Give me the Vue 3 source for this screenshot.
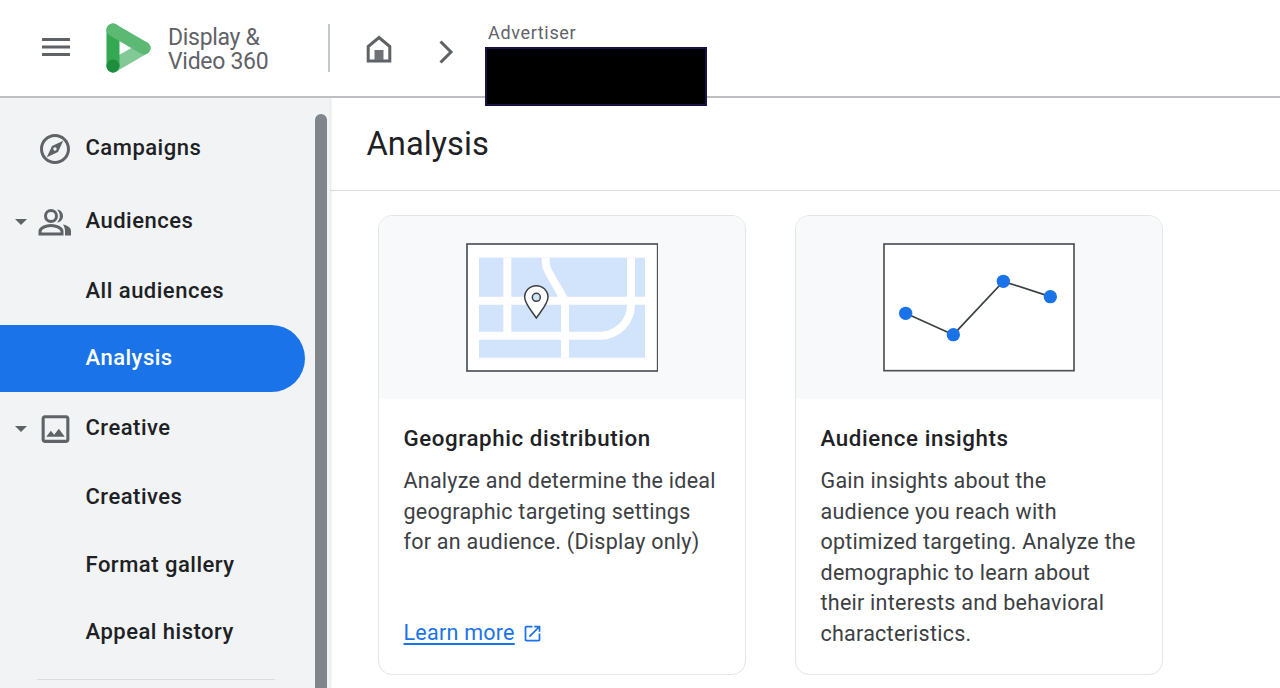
<script setup>
const navItems = [
  { label: "Campaigns", icon: "explore", space: 0 },
  { label: "Audiences", icon: "people", caret: true, space: 6 },
  { label: "All audiences", space: 3 },
  { label: "Analysis", active: true, space: 0 },
  { label: "Creative", icon: "image", caret: true, space: 3 },
  { label: "Creatives", space: 2 },
  { label: "Format gallery", space: 1 },
  { label: "Appeal history", space: 0 },
];

const insights = [
  "Gain insights about the",
  "audience you reach with",
  "optimized targeting. Analyze the",
  "demographic to learn about",
  "their interests and behavioral",
  "characteristics.",
];

const geoLines = [
  "Analyze and determine the ideal",
  "geographic targeting settings",
  "for an audience. (Display only)",
];

const chartDots = [
  [347, 309],
  [490, 373],
  [640, 213],
  [781, 259],
];
</script>

<template>
  <div class="page">
    <header class="topbar">
      <svg class="menu-icon" viewBox="0 0 28 20" width="28" height="20">
        <path d="M0 2.500h28M0 10h28M0 17.500h28" stroke="#5f6368" stroke-width="3" fill="none" />
      </svg>
      <svg class="logo" viewBox="0 0 46 50" width="46" height="50">
        <path d="M38 25L7 43" stroke="#81c995" stroke-width="13" stroke-linecap="round" />
        <path d="M7 7V43" stroke="#34a853" stroke-width="13" stroke-linecap="round" />
        <path d="M7 7L38 25" stroke="#5bb974" stroke-width="13" stroke-linecap="round" />
        <circle cx="7" cy="43" r="6.500" fill="#1e8e3e" />
      </svg>
      <div class="product">Display &amp;<br />Video 360</div>
      <div class="bar-divider"></div>
      <svg class="home-icon" viewBox="0 0 26 28" width="26" height="28">
        <path d="M2.200 26V11.500L13 2.500l10.800 9V26H2.200z" fill="none" stroke="#5f6368" stroke-width="3" />
        <rect x="8.500" y="15" width="9" height="10" fill="#6f7377" />
      </svg>
      <svg class="chevron" viewBox="0 0 16 24" width="16" height="24">
        <path d="M2.500 1.500L13 12 2.500 22.500" fill="none" stroke="#5f6368" stroke-width="3" />
      </svg>
      <div class="crumb">
        <div class="crumb-label">Advertiser</div>
        <div class="redacted"></div>
      </div>
    </header>

    <div class="content">
      <aside class="sidebar">
        <nav class="nav">
          <div
            v-for="item in navItems"
            :key="item.label"
            class="nav-row"
            :class="{ active: item.active }"
            :style="{ marginTop: item.space + 'px' }"
          >
            <span v-if="item.caret" class="caret"></span>
            <svg v-if="item.icon === 'explore'" class="nav-icon" viewBox="0 0 24 24" width="36" height="36">
              <path fill="#5f6368" d="M12 2C6.480 2 2 6.480 2 12s4.480 10 10 10 10-4.480 10-10S17.520 2 12 2zm0 18c-4.410 0-8-3.590-8-8s3.590-8 8-8 8 3.590 8 8-3.590 8-8 8zm-5.500-2.500l7.510-3.490L17.500 6.500 9.990 9.990 6.500 17.500zm5.500-6.600c.610 0 1.100.490 1.100 1.100s-.490 1.100-1.100 1.100-1.100-.490-1.100-1.100.490-1.100 1.100-1.100z" />
            </svg>
            <svg v-if="item.icon === 'people'" class="nav-icon" viewBox="0 0 36 28" width="36" height="28">
              <circle cx="14" cy="8" r="5.500" fill="none" stroke="#5f6368" stroke-width="3" />
              <path d="M3 26v-2.500c0-3.500 6-6 11-6s11 2.500 11 6V26H3z" fill="none" stroke="#5f6368" stroke-width="3" />
              <path d="M20 1.500c3.500 0 6 3 6 6.500s-2.500 6.500-6 6.500c1.800-1.800 2.800-4 2.800-6.500S21.800 3.300 20 1.500z" fill="#5f6368" />
              <path d="M26 16.500c4 .8 8 3 8 6.500v4.500h-6V23c0-2.500-.8-4.800-2-6.500z" fill="#5f6368" />
            </svg>
            <svg v-if="item.icon === 'image'" class="nav-icon" viewBox="0 0 24 24" width="37" height="37">
              <path fill="#5f6368" d="M19 5v14H5V5h14m0-2H5c-1.100 0-2 .9-2 2v14c0 1.100.9 2 2 2h14c1.100 0 2-.9 2-2V5c0-1.100-.9-2-2-2zm-4.860 8.860l-3 3.870L9 13.140 6 17h12l-3.860-5.140z" />
            </svg>
            <span class="nav-label">{{ item.label }}</span>
          </div>
        </nav>
        <div class="nav-divider"></div>
        <div class="scrollbar"></div>
      </aside>

      <main class="main">
        <div class="title-row">
          <h1>Analysis</h1>
        </div>
        <div class="cards">
          <section class="card">
            <div class="card-art">
              <svg viewBox="288 97 576 387" width="192" height="129">
                <rect x="291" y="100" width="572" height="381" fill="#fff" stroke="#4d5156" stroke-width="5" />
                <rect x="327" y="141" width="498" height="300" fill="#d2e3fc" />
                <g fill="none" stroke="#fff" stroke-width="24">
                  <path d="M412 141V375" />
                  <path d="M327 270H825" />
                  <path d="M585 270V441" />
                  <path d="M327 375H690C740 375 783 335 783 282V141" />
                  <path d="M527 141V155C527 175 540 190 585 270" />
                </g>
                <path d="M499 322C480 295 464 278 464 260a35 35 0 0 1 70 0c0 18-16 35-35 62z" fill="#fff" stroke="#3c4043" stroke-width="4.500" />
                <circle cx="499" cy="260" r="12" fill="#d2e3fc" stroke="#3c4043" stroke-width="4.500" />
              </svg>
            </div>
            <div class="card-body">
              <h2>Geographic distribution</h2>
              <p>
                <span v-for="line in geoLines" :key="line" class="line">{{ line }}</span>
              </p>
              <a class="learn" href="#" @click.prevent>
                <span class="learn-text">Learn more</span>
                <svg viewBox="0 0 24 24" width="21" height="21">
                  <path fill="#1a73e8" d="M19 19H5V5h7V3H5c-1.110 0-2 .9-2 2v14c0 1.100.89 2 2 2h14c1.100 0 2-.9 2-2v-7h-2v7zM14 3v2h3.590l-9.830 9.830 1.410 1.410L19 6.410V10h2V3h-7z" />
                </svg>
              </a>
            </div>
          </section>

          <section class="card">
            <div class="card-art">
              <svg viewBox="279 98 576 387" width="192" height="129">
                <rect x="282" y="101" width="570" height="380" fill="#fff" stroke="#4d5156" stroke-width="5" />
                <polyline points="347,309 490,373 640,213 781,259" fill="none" stroke="#3c4043" stroke-width="5" />
                <circle v-for="dot in chartDots" :key="dot[0]" :cx="dot[0]" :cy="dot[1]" r="20" fill="#1a73e8" />
              </svg>
            </div>
            <div class="card-body">
              <h2>Audience insights</h2>
              <p>
                <span v-for="line in insights" :key="line" class="line">{{ line }}</span>
              </p>
            </div>
          </section>
        </div>
      </main>
    </div>
  </div>
</template>

<style scoped>
.page {
  width: 1280px;
  height: 688px;
  overflow: hidden;
  display: flex;
  flex-direction: column;
  font-family: Roboto, "Liberation Sans", sans-serif;
  color: #202124;
  background: #fff;
}

/* header */
.topbar {
  height: 98px;
  flex: none;
  box-sizing: border-box;
  border-bottom: 2px solid #bdbfc2;
  display: flex;
  align-items: center;
  position: relative;
  z-index: 3;
  background: #fff;
}
.menu-icon {
  margin: 0 0 2px 42px;
}
.logo {
  margin: 0 0 1px 36px;
}
.product {
  margin: 4px 0 0 16px;
  font-size: 23px;
  line-height: 24.500px;
  color: #5f6368;
  letter-spacing: -0.3px;
  width: 160px;
}
.bar-divider {
  width: 2px;
  height: 48px;
  background: #c4c7ca;
  margin-right: 36px;
}
.home-icon {
  margin-top: 1px;
}
.chevron {
  margin-left: 46px;
  margin-top: 7px;
}
.crumb {
  margin-left: 31px;
  align-self: flex-start;
  padding-top: 21px;
}
.crumb-label {
  font-size: 18px;
  line-height: 24px;
  letter-spacing: 0.65px;
  color: #5f6368;
  margin-left: 3px;
}
.redacted {
  width: 222px;
  height: 59px;
  margin-top: 2px;
  box-sizing: border-box;
  background: #000;
  border: 2px solid #1b1147;
}

/* sidebar */
.content {
  flex: 1;
  display: flex;
  min-height: 0;
}
.sidebar {
  width: 330px;
  flex: none;
  background: #f1f3f4;
  position: relative;
  box-shadow: 1px 0 2px rgba(60, 64, 67, 0.15);
  z-index: 2;
  padding-top: 17px;
  box-sizing: border-box;
}
.nav {
  width: 305px;
}
.nav-row {
  height: 67px;
  display: flex;
  align-items: center;
  position: relative;
  padding-left: 85.500px;
  border-radius: 0 34px 34px 0;
  font-size: 22px;
  font-weight: 490;
  letter-spacing: 0.5px;
}
.nav-label {
  margin-bottom: 2px;
}
.nav-row.active {
  background: #1a73e8;
  color: #fff;
}
.nav-icon {
  position: absolute;
  left: 37px;
  top: 50%;
  transform: translateY(-50%);
}
.caret {
  position: absolute;
  left: 15px;
  top: 31px;
  width: 0;
  height: 0;
  border-left: 6px solid transparent;
  border-right: 6px solid transparent;
  border-top: 6px solid #5f6368;
}
.nav-divider {
  width: 238px;
  height: 1px;
  margin: 13px 0 0 37px;
  background: #dadce0;
}
.scrollbar {
  position: absolute;
  left: 315px;
  top: 16px;
  bottom: 0;
  width: 12px;
  background: #80868b;
  border-radius: 6px 6px 0 0;
}

/* main */
.main {
  flex: 1;
  min-width: 0;
}
.title-row {
  height: 93px;
  box-sizing: border-box;
  border-bottom: 1px solid #dadce0;
  padding-left: 36.500px;
  display: flex;
  align-items: center;
}
h1 {
  margin: 0;
  font-size: 32.700px;
  font-weight: 400;
  color: #202124;
}
.cards {
  display: flex;
  gap: 49px;
  padding: 24px 0 0 48px;
}
.card {
  width: 368px;
  height: 460px;
  box-sizing: border-box;
  border: 1px solid #e3e5e8;
  border-radius: 14px;
  overflow: hidden;
  display: flex;
  flex-direction: column;
}
.card-art {
  height: 183px;
  flex: none;
  box-sizing: border-box;
  background: #f8f9fa;
  display: flex;
  align-items: center;
  justify-content: center;
}
.card-art svg {
  display: block;
}
.card-body {
  flex: 1;
  padding: 25px 24.500px 26px;
  display: flex;
  flex-direction: column;
}
h2 {
  margin: 0;
  font-size: 22.300px;
  line-height: 28px;
  font-weight: 490;
  letter-spacing: 0.6px;
  color: #202124;
}
.card-body p {
  margin: 14px 0 0;
  font-size: 21.500px;
  line-height: 30.500px;
  letter-spacing: 0.25px;
  color: #3c4043;
  white-space: nowrap;
}
.line {
  display: block;
}
.learn {
  margin-top: auto;
  display: flex;
  align-items: center;
  gap: 7px;
  font-size: 21.500px;
  line-height: 30px;
  letter-spacing: 0.25px;
  color: #1a73e8;
  text-decoration: none;
}
.learn-text {
  text-decoration: underline;
  text-underline-offset: 3px;
}
</style>

<style>
html,
body {
  margin: 0;
  overflow: hidden;
}
</style>
